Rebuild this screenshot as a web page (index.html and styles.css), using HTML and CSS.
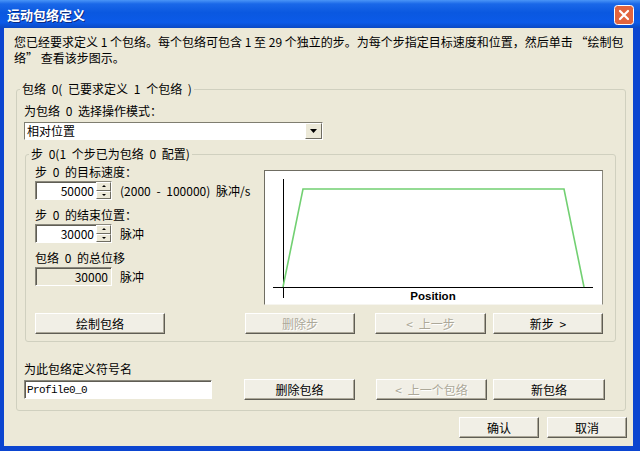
FILE: index.html
```html
<!DOCTYPE html>
<html lang="zh-CN">
<head>
  <meta charset="UTF-8" />
  <title>运动包络定义</title>
  <link rel="stylesheet" href="styles.css">
</head>
<body>

<div class="window">
  <div class="titlebar">
    <span class="title">运动包络定义</span>
    <svg class="close" width="20" height="20" viewBox="0 0 20 20">
      <rect x="0.5" y="0.5" width="19" height="19" rx="3" fill="#e2643e" stroke="#fff"/>
      <path d="M6 6 L14 14 M14 6 L6 14" stroke="#fff" stroke-width="2.2" stroke-linecap="round"/>
    </svg>
  </div>

  <div class="client">
    <p class="intro">您已经要求定义 1 个包络。每个包络可包含 1 至 29 个独立的步。为每个步指定目标速度和位置，然后单击 “绘制包<br>络” 查看该步图示。</p>

    <fieldset class="group outer">
      <legend>包络 0( 已要求定义 1 个包络 )</legend>
      <div class="outer-body">
        <div class="label">为包络 0 选择操作模式：</div>
        <div class="select">
          <span class="select-text">相对位置</span>
          <span class="drop">
            <svg width="7" height="4" viewBox="0 0 7 4"><path d="M0 0 H7 L3.5 4 Z" fill="#000"/></svg>
          </span>
        </div>

        <fieldset class="group inner">
          <legend>步 0(1 个步已为包络 0 配置)</legend>
          <div class="inner-body">
            <div class="step-body">
              <div class="fields">
                <div class="label">步 0 的目标速度：</div>
                <div class="field-row">
                  <div class="edit spinner">
                    <span class="value">50000</span>
                    <span class="spin">
                      <span class="spin-btn"><i class="up"></i></span>
                      <span class="spin-btn"><i class="down"></i></span>
                    </span>
                  </div>
                  <span class="unit">(2000 - 100000) 脉冲/s</span>
                </div>

                <div class="label gap">步 0 的结束位置：</div>
                <div class="field-row">
                  <div class="edit spinner">
                    <span class="value">30000</span>
                    <span class="spin">
                      <span class="spin-btn"><i class="up"></i></span>
                      <span class="spin-btn"><i class="down"></i></span>
                    </span>
                  </div>
                  <span class="unit">脉冲</span>
                </div>

                <div class="label gap">包络 0 的总位移</div>
                <div class="field-row">
                  <div class="edit readonly"><span class="value">30000</span></div>
                  <span class="unit">脉冲</span>
                </div>
              </div>

              <div class="chart">
                <svg width="337" height="133" viewBox="0 0 337 133">
                  <line x1="18.5" y1="8" x2="18.5" y2="127" stroke="#000"/>
                  <line x1="8" y1="116.5" x2="328" y2="116.5" stroke="#000"/>
                  <polyline points="18,116 38,18 299,18 319,116" fill="none" stroke="#72d072" stroke-width="1.6"/>
                  <text x="168" y="129" text-anchor="middle" class="axis-label">Position</text>
                </svg>
              </div>
            </div>

            <div class="btn-row">
              <button class="btn w130">绘制包络</button>
              <button class="btn w110 ml80" disabled>删除步</button>
              <button class="btn w111 ml20" disabled>&lt; 上一步</button>
              <button class="btn w110 ml7">新步 &gt;</button>
            </div>
          </div>
        </fieldset>

        <div class="label name-label">为此包络定义符号名</div>
        <div class="name-row">
          <div class="edit name"><span class="mono">Profile0_0</span></div>
          <button class="btn w111 ml32">删除包络</button>
          <button class="btn w111 ml21" disabled>&lt; 上一个包络</button>
          <button class="btn w112 ml6">新包络</button>
        </div>
      </div>
    </fieldset>

    <div class="dialog-buttons">
      <button class="btn w80">确认</button>
      <button class="btn w80">取消</button>
    </div>
  </div>
</div>

</body>
</html>
```

FILE: styles.css
```css
* {
  box-sizing: border-box;
}
body {
  margin: 0;
  font-family: "Noto Sans CJK SC", "Noto Sans", sans-serif;
  font-size: 12px;
  color: #000;
  background: #fff;
}
.window {
  width: 640px;
  height: 451px;
  display: flex;
  flex-direction: column;
  background: #0b45d0;
}
.titlebar {
  height: 28px;
  flex: none;
  display: flex;
  align-items: center;
  justify-content: space-between;
  padding: 0 6px 0 7px;
  background: linear-gradient(#4a95f7 0%, #1a68e8 14%, #0a58e0 45%, #0b5ae8 80%, #0a49c4 100%);
}
.title {
  color: #fff;
  font-weight: bold;
  font-size: 13px;
  text-shadow: 1px 1px 0 #0b2a80;
}
.close {
  display: block;
  margin-top: 2px;
}
.client {
  flex: 1;
  margin: 0 7px 5px 4px;
  background: #ece9d8;
  display: flex;
  flex-direction: column;
}
.intro {
  margin: 6px 0 0 10px;
  line-height: 16px;
  white-space: nowrap;
}

/* group boxes */
.group {
  margin: 0;
  padding: 0;
  min-width: 0;
  border: 1px solid #d0d0bf;
  border-radius: 3px;
}
.group legend {
  margin-left: 3px;
  padding: 0 2px;
  line-height: 14px;
  word-spacing: 3px;
}
.outer {
  margin: 16px 7px 0 12px;
}
.outer-body {
  padding: 8px 9px 10px 7px;
}
.inner {
  margin: 7px 0 0 1px;
}
.inner-body {
  padding: 4px 12px 7px 9px;
}
.label {
  line-height: 14px;
  white-space: nowrap;
  word-spacing: 3px;
}
.label.gap {
  margin-top: 8px;
}

/* combo box */
.select {
  margin-top: 4px;
  width: 299px;
  height: 18px;
  display: flex;
  align-items: center;
  background: #fff;
  border: 1px solid;
  border-color: #7f7d70 #fff #fff #7f7d70;
}
.select-text {
  flex: 1;
  padding-left: 2px;
  line-height: 14px;
}
.drop {
  width: 17px;
  height: 16px;
  display: flex;
  align-items: center;
  justify-content: center;
  background: #ece9d8;
  border: 1px solid;
  border-color: #fff #6f6d62 #6f6d62 #fff;
}

/* edits */
.step-body {
  display: grid;
  grid-template-columns: 229px 1fr;
}
.field-row {
  margin-top: 2px;
  display: flex;
  align-items: center;
}
.edit {
  width: 77px;
  height: 19px;
  display: flex;
  align-items: center;
  background: #fff;
  border: 1px solid;
  border-color: #8a887c #fff #fff #8a887c;
  box-shadow: inset 1px 1px 0 #5f5d54;
}
.edit .value {
  flex: 1;
  text-align: right;
  line-height: 14px;
  padding-right: 2px;
}
.readonly {
  background: #ece9d8;
}
.readonly .value {
  padding-right: 3px;
}
.spin {
  width: 15px;
  height: 17px;
  display: flex;
  flex-direction: column;
}
.spin-btn {
  flex: 1;
  display: flex;
  align-items: center;
  justify-content: center;
  background: #ece9d8;
  border: 1px solid;
  border-color: #fff #6f6d62 #6f6d62 #fff;
}
.spin-btn i {
  width: 0;
  height: 0;
  border-left: 2px solid transparent;
  border-right: 2px solid transparent;
}
.spin-btn .up {
  border-bottom: 2px solid #000;
}
.spin-btn .down {
  border-top: 2px solid #000;
}
.unit {
  margin-left: 8px;
  white-space: nowrap;
  line-height: 14px;
  word-spacing: 3px;
}

/* chart */
.chart {
  margin-top: 5px;
  height: 135px;
  background: #fff;
  border: 1px solid;
  border-color: #6f6d62 #8a887c #f6f5ef #6f6d62;
}
.chart svg {
  display: block;
}
.axis-label {
  font-family: "Liberation Sans", Arial, sans-serif;
  font-size: 11.5px;
  font-weight: bold;
  fill: #000;
}

/* buttons */
.btn {
  height: 21px;
  padding: 0;
  font: inherit;
  color: #000;
  word-spacing: 3px;
  background: #f1efe6;
  border: 1px solid;
  border-color: #fff #5f5d54 #5f5d54 #fff;
  box-shadow: inset -1px -1px 0 #aca899;
}
.btn:disabled {
  color: #aca899;
  text-shadow: 1px 1px 0 #fff;
}
.btn-row {
  margin-top: 8px;
  display: flex;
}
.w80 { width: 80px; }
.w110 { width: 110px; }
.w111 { width: 111px; }
.w112 { width: 112px; }
.w130 { width: 130px; }
.ml6 { margin-left: 6px; }
.ml7 { margin-left: 7px; }
.ml20 { margin-left: 20px; }
.ml21 { margin-left: 21px; }
.ml32 { margin-left: 32px; }
.ml80 { margin-left: 80px; }

/* symbol name */
.name-label {
  margin-top: 20px;
}
.name-row {
  margin-top: 3px;
  display: flex;
  align-items: center;
}
.edit.name {
  width: 188px;
  padding-left: 2px;
}
.mono {
  font-family: "Liberation Mono", "Courier New", monospace;
  font-size: 11px;
  letter-spacing: -0.6px;
}
.dialog-buttons {
  margin: 6px 6px 0 0;
  display: flex;
  justify-content: flex-end;
  gap: 8px;
}
```
